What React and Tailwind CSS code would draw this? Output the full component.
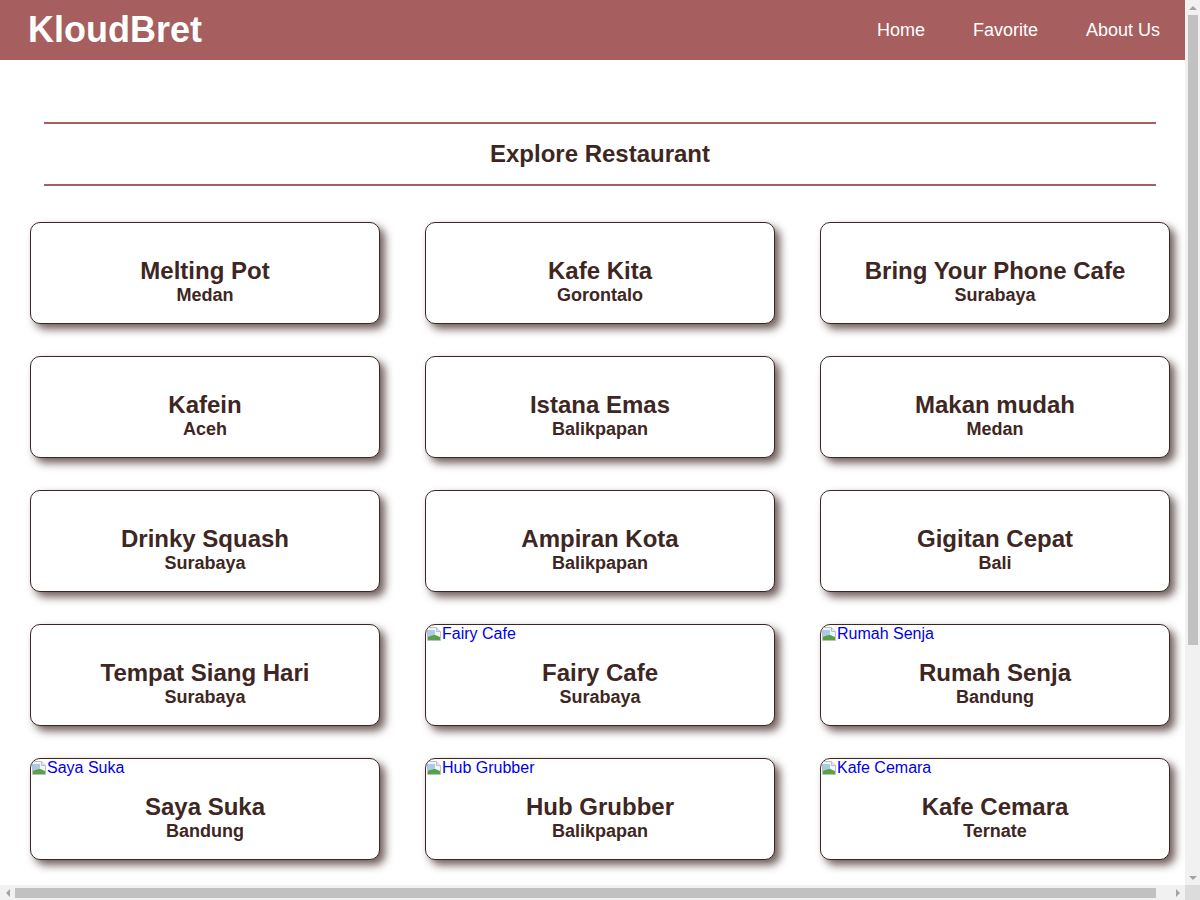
import React from 'react'

const restaurants = [
  { name: 'Melting Pot', city: 'Medan' },
  { name: 'Kafe Kita', city: 'Gorontalo' },
  { name: 'Bring Your Phone Cafe', city: 'Surabaya' },
  { name: 'Kafein', city: 'Aceh' },
  { name: 'Istana Emas', city: 'Balikpapan' },
  { name: 'Makan mudah', city: 'Medan' },
  { name: 'Drinky Squash', city: 'Surabaya' },
  { name: 'Ampiran Kota', city: 'Balikpapan' },
  { name: 'Gigitan Cepat', city: 'Bali' },
  { name: 'Tempat Siang Hari', city: 'Surabaya' },
  { name: 'Fairy Cafe', city: 'Surabaya', broken: true },
  { name: 'Rumah Senja', city: 'Bandung', broken: true },
  { name: 'Saya Suka', city: 'Bandung', broken: true },
  { name: 'Hub Grubber', city: 'Balikpapan', broken: true },
  { name: 'Kafe Cemara', city: 'Ternate', broken: true },
]

// little "image failed to load" glyph + alt text, like the browser draws it
function BrokenImage({ alt }) {
  return (
    <span className="absolute left-0 top-0 flex items-center text-[16px] leading-[18px] text-[#0000ee] font-normal">
      <svg width="16" height="16" viewBox="0 0 16 16" className="shrink-0">
        <path d="M1.5 1.5h9l4 4v9h-13z" fill="#f2f4f6" stroke="#b9c0c8" />
        <path d="M10.5 1.5v4h4" fill="#e3e7eb" stroke="#b9c0c8" />
        <path d="M2 10c3-3 6-2 12 1v3H2z" fill="#5aa046" />
        <path d="M2 4h7v5c-3 0-5 1-7 2z" fill="#a9cbe6" />
      </svg>
      {alt}
    </span>
  )
}

function Card({ item }) {
  return (
    <div className="relative h-[102px] rounded-[10px] border border-[#3e2723] bg-white shadow-[5px_5px_8px_rgba(62,39,35,0.75)] overflow-hidden">
      {item.broken && <BrokenImage alt={item.name} />}
      <div className="flex flex-col items-center pt-[34px] text-[#3e2723] font-bold">
        <h3 className="text-[24px] leading-[28px]">{item.name}</h3>
        <p className="text-[18px] leading-[21px]">{item.city}</p>
      </div>
    </div>
  )
}

function Arrow({ dir }) {
  const paths = {
    up: 'M0 4L4 0L8 4z',
    down: 'M0 0L8 0L4 4z',
    left: 'M4 0L4 8L0 4z',
    right: 'M0 0L4 4L0 8z',
  }
  const vertical = dir === 'up' || dir === 'down'
  return (
    <svg width={vertical ? 8 : 4} height={vertical ? 4 : 8} viewBox={vertical ? '0 0 8 4' : '0 0 4 8'}>
      <path d={paths[dir]} fill="#a3a3a3" />
    </svg>
  )
}

function Page() {
  return (
    <div className="w-[1200px] bg-white font-['Liberation_Sans',Arial,sans-serif]">
      <header className="flex items-center justify-between h-[60px] bg-[#a65e5e] pl-[28px] pr-[16px]">
        <h1 className="text-[36px] font-bold text-white leading-none">KloudBret</h1>
        <nav className="flex text-[18px] text-white">
          <a className="px-6" href="#">Home</a>
          <a className="px-6" href="#">Favorite</a>
          <a className="px-6" href="#">About Us</a>
        </nav>
      </header>

      <main className="pt-[62px] pb-[72px]">
        <div className="mx-[44px] border-y-2 border-[#a65e5e] py-[16px] text-center">
          <h2 className="text-[24px] leading-[28px] font-bold text-[#3e2723]">Explore Restaurant</h2>
        </div>

        <div className="grid grid-cols-[repeat(3,350px)] justify-center gap-x-[45px] gap-y-[32px] mt-[36px]">
          {restaurants.map((r, i) => (
            <Card key={i} item={r} />
          ))}
        </div>
      </main>
    </div>
  )
}

export default function App() {
  return (
    <div className="flex flex-col w-[1200px] h-[900px] overflow-hidden bg-white">
      <div className="flex h-[885px] shrink-0">
        {/* viewport */}
        <div className="w-[1185px] h-[885px] shrink-0 overflow-hidden">
          <Page />
        </div>
        {/* vertical scrollbar */}
        <div className="flex flex-col items-center w-[15px] h-[885px] shrink-0 bg-[#f1f1f1]">
          <div className="flex items-center justify-center h-[15px] shrink-0">
            <Arrow dir="up" />
          </div>
          <div className="w-[10px] h-[630px] shrink-0 bg-[#c1c1c1]" />
          <div className="flex-1" />
          <div className="flex items-center justify-center h-[15px] shrink-0">
            <Arrow dir="down" />
          </div>
        </div>
      </div>
      {/* horizontal scrollbar */}
      <div className="flex h-[15px] shrink-0">
        <div className="flex items-center w-[1185px] h-[15px] shrink-0 bg-[#f1f1f1]">
          <div className="flex items-center justify-center w-[15px] shrink-0">
            <Arrow dir="left" />
          </div>
          <div className="w-[1141px] h-[10px] shrink-0 bg-[#c1c1c1]" />
          <div className="flex-1" />
          <div className="flex items-center justify-center w-[15px] shrink-0">
            <Arrow dir="right" />
          </div>
        </div>
        <div className="w-[15px] h-[15px] bg-[#dcdcdc]" />
      </div>
    </div>
  )
}
